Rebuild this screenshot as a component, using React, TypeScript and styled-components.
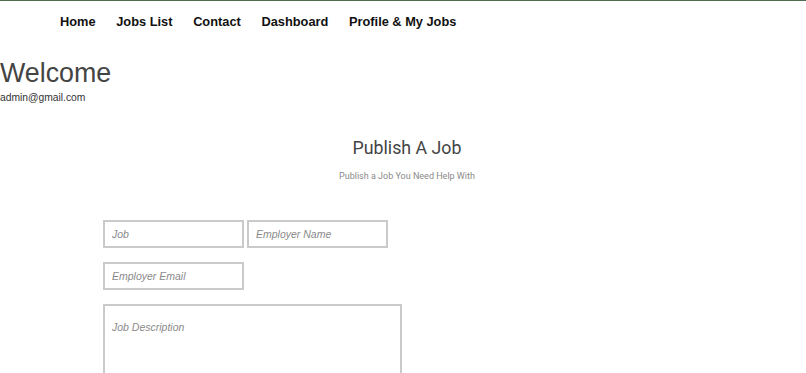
import styled, { createGlobalStyle } from "styled-components";

const GlobalStyle = createGlobalStyle`
  html, body {
    margin: 0;
    padding: 0;
    background: #ffffff;
  }
  body {
    font-family: "Liberation Sans", Arial, sans-serif;
  }
  * {
    box-sizing: border-box;
  }
`;

const Page = styled.div`
  border-top: 1px solid #4f6b4f;
  height: 373px;
  overflow: hidden;
`;

const Nav = styled.nav`
  display: flex;
  align-items: center;
  gap: 20.7px;
  height: 40px;
  padding-left: 60px;
`;

const NavLink = styled.a`
  font-size: 12.8px;
  font-weight: 700;
  color: #111111;
  text-decoration: none;
  cursor: pointer;
`;

const Greeting = styled.section`
  margin-top: 19px;
`;

const Welcome = styled.h1`
  margin: 0;
  font-size: 26.8px;
  font-weight: 400;
  line-height: 1;
  color: #444444;
`;

const UserEmail = styled.div`
  font-size: 10.3px;
  line-height: 14px;
  color: #333333;
  margin-top: 4px;
`;

const Intro = styled.header`
  margin-top: 32px;
  padding-left: 8px;
  text-align: center;
  font-family: Roboto, "Liberation Sans", Arial, sans-serif;
`;

const Title = styled.h2`
  margin: 0;
  font-size: 17.8px;
  font-weight: 400;
  line-height: 22px;
  color: #444444;
`;

const Subtitle = styled.p`
  margin: 11px 0 0;
  font-size: 9px;
  line-height: 12px;
  color: #8a8a8a;
`;

const Form = styled.form`
  display: flex;
  flex-direction: column;
  gap: 14px;
  margin: 38px 0 0 103px;
`;

const Row = styled.div`
  display: flex;
  gap: 3px;
`;

const fieldStyles = `
  border: 2px solid #cacaca;
  background: #ffffff;
  font-family: "Liberation Sans", Arial, sans-serif;
  font-size: 10.5px;
  color: #333333;
  outline: none;
  &::placeholder {
    font-style: italic;
    color: #8a8a8a;
  }
`;

const Input = styled.input`
  ${fieldStyles}
  width: 141px;
  height: 28px;
  padding: 0 7px;
`;

const TextArea = styled.textarea`
  ${fieldStyles}
  width: 299px;
  height: 110px;
  padding: 15px 7px;
  resize: none;
`;

const links = ["Home", "Jobs List", "Contact", "Dashboard", "Profile & My Jobs"];

export default function App() {
  return (
    <>
      <GlobalStyle />
      <Page>
        <Nav>
          {links.map((label) => (
            <NavLink key={label}>{label}</NavLink>
          ))}
        </Nav>

        <Greeting>
          <Welcome>Welcome</Welcome>
          <UserEmail>admin@gmail.com</UserEmail>
        </Greeting>

        <Intro>
          <Title>Publish A Job</Title>
          <Subtitle>Publish a Job You Need Help With</Subtitle>
        </Intro>

        <Form onSubmit={(e) => e.preventDefault()}>
          <Row>
            <Input placeholder="Job" />
            <Input placeholder="Employer Name" />
          </Row>
          <Row>
            <Input type="email" placeholder="Employer Email" />
          </Row>
          <TextArea placeholder="Job Description" />
        </Form>
      </Page>
    </>
  );
}
